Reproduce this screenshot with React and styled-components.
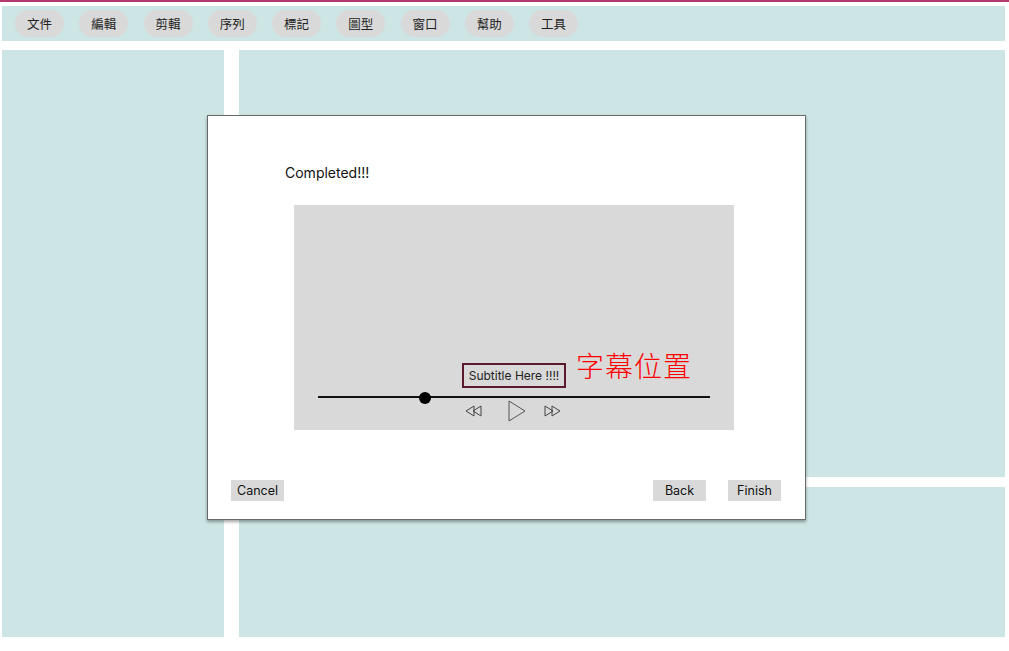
import React from 'react'
import styled, { createGlobalStyle } from 'styled-components'

const GlobalStyle = createGlobalStyle`
  html, body {
    margin: 0;
    padding: 0;
    background: #ffffff;
    font-family: Inter, "Noto Sans CJK TC", sans-serif;
  }
`

const Page = styled.div`
  position: relative;
  width: 1009px;
  height: 651px;
  border-top: 2px solid #b23a6e;
  box-sizing: border-box;
  padding: 4px 4px 0 2px;
  display: flex;
  flex-direction: column;
  gap: 9px;
`

const Toolbar = styled.div`
  height: 35px;
  background: #cde5e5;
  display: flex;
  align-items: center;
  gap: 15.25px;
  padding-left: 13px;
`

const MenuPill = styled.div`
  width: 49px;
  height: 27px;
  border-radius: 14px;
  background: #d9d9d9;
  display: flex;
  align-items: center;
  justify-content: center;
  font-size: 12.5px;
  color: #222;
  font-family: "Noto Sans CJK TC", sans-serif;
`

const Body = styled.div`
  display: flex;
  gap: 15px;
  height: 587px;
`

const SidePanel = styled.div`
  width: 222px;
  background: #cde5e5;
`

const RightColumn = styled.div`
  flex: 1;
  display: flex;
  flex-direction: column;
  gap: 10px;
`

const Panel = styled.div`
  background: #cde5e5;
  height: ${p => p.h}px;
`

const Modal = styled.div`
  position: absolute;
  left: 207px;
  top: 113px;
  width: 599px;
  height: 405px;
  box-sizing: border-box;
  background: #fff;
  border: 1px solid #6a6a6a;
  box-shadow: 0 2px 3px rgba(0, 0, 0, 0.35);
  display: flex;
  flex-direction: column;
  padding: 48px 24px 18px 23px;
`

const Title = styled.div`
  font-size: 14px;
  color: #111;
  margin-left: 54px;
  line-height: 18px;
`

const Video = styled.div`
  position: relative;
  margin: 23px 0 0 63px;
  width: 440px;
  height: 225px;
  background: #d9d9d9;
`

const Subtitle = styled.div`
  position: absolute;
  left: 168px;
  top: 158px;
  width: 104px;
  height: 25px;
  box-sizing: border-box;
  border: 2px solid #5b1a2c;
  font-size: 12px;
  color: #222;
  display: flex;
  align-items: center;
  justify-content: center;
`

const SubLabel = styled.div`
  position: absolute;
  left: 282px;
  top: 140px;
  font-size: 28px;
  font-weight: 300;
  color: #ff0000;
  font-family: "Noto Sans CJK TC", serif;
  letter-spacing: 1px;
`

const Track = styled.div`
  position: absolute;
  left: 24px;
  top: 191px;
  width: 392px;
  height: 2px;
  background: #111;
`

const Knob = styled.div`
  position: absolute;
  left: 125px;
  top: 187px;
  width: 12px;
  height: 12px;
  border-radius: 50%;
  background: #000;
`

const Controls = styled.div`
  position: absolute;
  left: 171px;
  top: 195px;
  display: flex;
  align-items: center;
`

const Icon = styled.svg`
  display: block;
  margin-left: ${p => p.$gap || 0}px;
`

const Footer = styled.div`
  margin-top: auto;
  display: flex;
  align-items: center;
  gap: 22px;
`

const Button = styled.div`
  width: 53px;
  height: 21px;
  background: #d9d9d9;
  font-size: 12.5px;
  color: #111;
  display: flex;
  align-items: center;
  justify-content: center;
  margin-left: ${p => (p.$push ? 'auto' : '0')};
`

const menus = ['文件', '編輯', '剪輯', '序列', '標記', '圖型', '窗口', '幫助', '工具']

function Rewind() {
  return (
    <Icon width="18" height="12" viewBox="0 0 18 12">
      <polygon points="1,6 9,1 9,11" fill="none" stroke="#444" strokeWidth="1" />
      <polygon points="8,6 16,1 16,11" fill="none" stroke="#444" strokeWidth="1" />
    </Icon>
  )
}

function Forward() {
  return (
    <Icon $gap={16} width="18" height="12" viewBox="0 0 18 12">
      <polygon points="2,1 10,6 2,11" fill="none" stroke="#444" strokeWidth="1" />
      <polygon points="9,1 17,6 9,11" fill="none" stroke="#444" strokeWidth="1" />
    </Icon>
  )
}

function Play() {
  return (
    <Icon $gap={24} width="20" height="22" viewBox="0 0 20 22">
      <polygon points="2,1 18,11 2,21" fill="none" stroke="#555" strokeWidth="1" />
    </Icon>
  )
}

export default function App() {
  return (
    <>
      <GlobalStyle />
      <Page>
        <Toolbar>
          {menus.map(m => (
            <MenuPill key={m}>{m}</MenuPill>
          ))}
        </Toolbar>
        <Body>
          <SidePanel />
          <RightColumn>
            <Panel h={427} />
            <Panel h={150} />
          </RightColumn>
        </Body>
        <Modal>
          <Title>Completed!!!</Title>
          <Video>
            <Subtitle>Subtitle Here !!!!</Subtitle>
            <SubLabel>字幕位置</SubLabel>
            <Track />
            <Knob />
            <Controls>
              <Rewind />
              <Play />
              <Forward />
            </Controls>
          </Video>
          <Footer>
            <Button>Cancel</Button>
            <Button $push>Back</Button>
            <Button>Finish</Button>
          </Footer>
        </Modal>
      </Page>
    </>
  )
}
